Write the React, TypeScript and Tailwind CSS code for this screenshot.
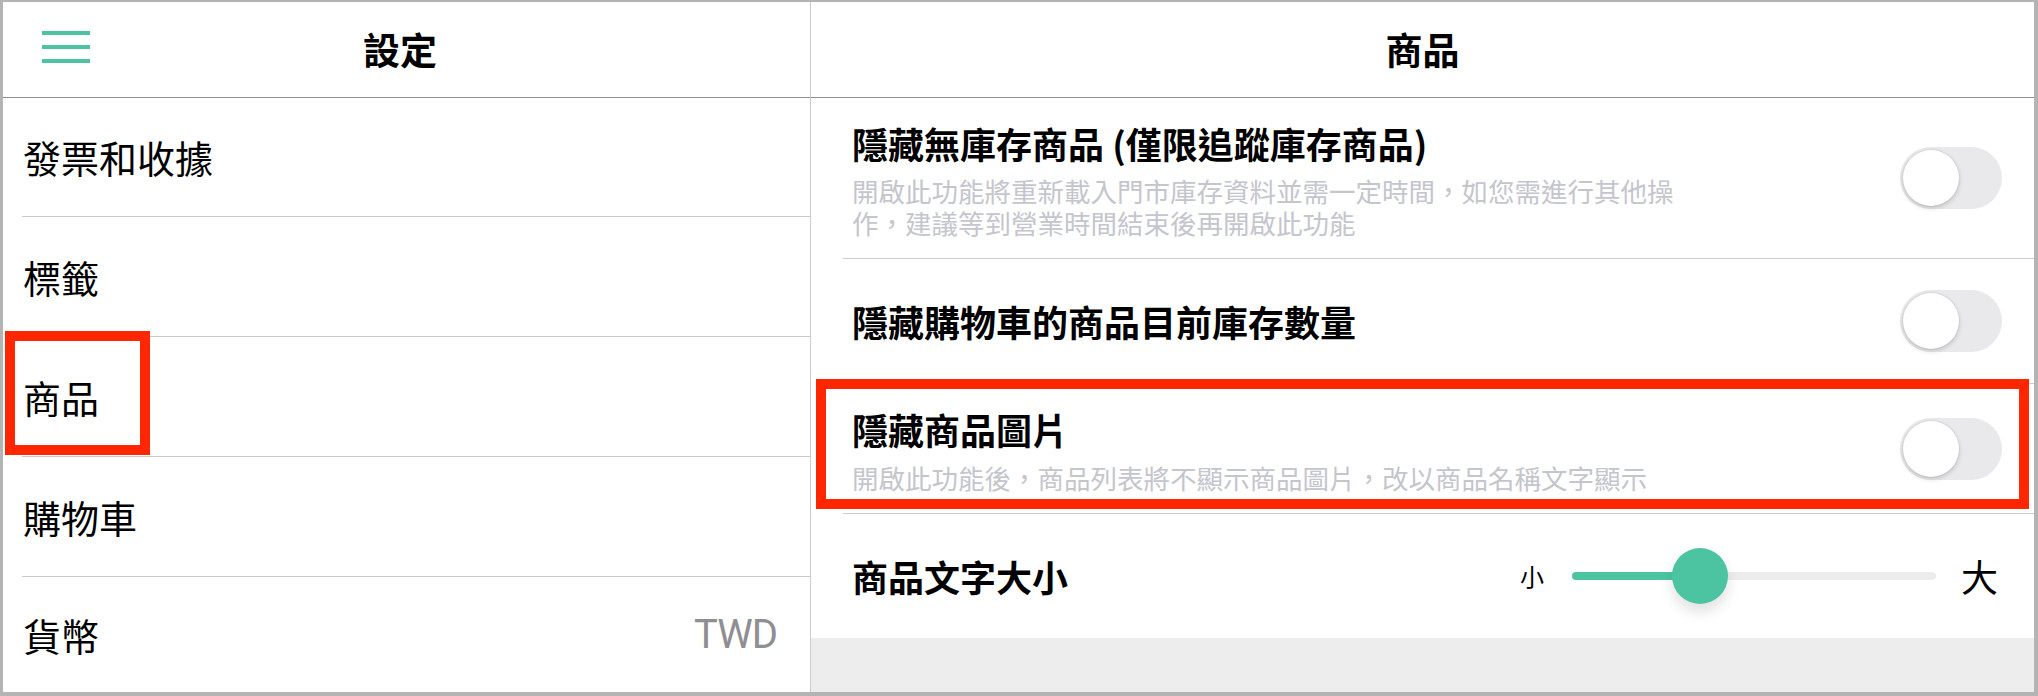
import React from "react";

function Toggle() {
  return (
    <div className="flex h-[62px] w-[102px] shrink-0 items-center rounded-full bg-[#e9e9eb] p-[3px]">
      <div className="h-[56px] w-[56px] rounded-full bg-white shadow-[0_2px_5px_rgba(0,0,0,0.18),0_0_0_1px_rgba(0,0,0,0.04)]" />
    </div>
  );
}

function LeftRow({ label, h }: { label: string; h: string }) {
  return (
    <div className={"ml-[19px] flex items-center justify-between border-b border-[#cbcbcb] pl-[1px] pr-[33px] " + h}>
      <span className="text-[38px] leading-none">{label}</span>
    </div>
  );
}

export default function App() {
  return (
    <div className="relative h-[696px] w-[2038px] bg-[#b4b4b4] pb-[4px] pl-[3px] pr-[4px] pt-[2px] font-['Noto_Sans_CJK_TC',sans-serif] text-black">
      <div className="flex h-full bg-white">
        {/* Left column */}
        <div className="flex w-[808px] shrink-0 flex-col border-r border-[#cdcdcd]">
          <div className="grid h-[96px] shrink-0 grid-cols-[1fr_auto_1fr] items-center border-b border-[#8f8f8f] pr-[13px]">
            <div className="mb-[5px] flex flex-col gap-[10px] pl-[39px]">
              <span className="block h-[4px] w-[48px] bg-[#4ec3a3]" />
              <span className="block h-[4px] w-[48px] bg-[#4ec3a3]" />
              <span className="block h-[4px] w-[48px] bg-[#4ec3a3]" />
            </div>
            <div className="text-[37px] font-bold leading-none">設定</div>
            <div />
          </div>
          <LeftRow label="發票和收據" h="h-[119px]" />
          <LeftRow label="標籤" h="h-[120px]" />
          <LeftRow label="商品" h="h-[120px]" />
          <LeftRow label="購物車" h="h-[120px]" />
          <div className="ml-[19px] flex flex-1 items-center justify-between pl-[1px] pr-[33px]">
            <span className="text-[38px] leading-none">貨幣</span>
            <span className="font-['Roboto',sans-serif] text-[40px] leading-none tracking-[-1px] text-[#8e8e93]">TWD</span>
          </div>
        </div>

        {/* Right column */}
        <div className="flex flex-1 flex-col">
          <div className="flex h-[96px] shrink-0 items-center justify-center border-b border-[#8f8f8f]">
            <div className="text-[37px] font-bold leading-none">商品</div>
          </div>

          <div className="ml-[32px] flex h-[161px] shrink-0 items-center border-b border-[#cdcdcd] pl-[9px] pr-[32px]">
            <div className="flex-1">
              <div className="text-[36px] font-bold leading-[52px]">隱藏無庫存商品 (僅限追蹤庫存商品)</div>
              <div className="mt-[6px] text-[26.5px] leading-[32px] text-[#c4c5cd]">
                開啟此功能將重新載入門市庫存資料並需一定時間，如您需進行其他操
                <br />
                作，建議等到營業時間結束後再開啟此功能
              </div>
            </div>
            <Toggle />
          </div>

          <div className="ml-[32px] flex h-[125px] shrink-0 items-center border-b border-[#cdcdcd] pl-[9px] pr-[32px]">
            <div className="flex-1 text-[36px] font-bold leading-[52px]">隱藏購物車的商品目前庫存數量</div>
            <Toggle />
          </div>

          <div className="ml-[32px] flex h-[130px] shrink-0 items-center border-b border-[#cdcdcd] pl-[9px] pr-[32px]">
            <div className="flex-1">
              <div className="text-[36px] font-bold leading-[52px]">隱藏商品圖片</div>
              <div className="mt-[7px] text-[26.5px] leading-[32px] text-[#c4c5cd]">
                開啟此功能後，商品列表將不顯示商品圖片，改以商品名稱文字顯示
              </div>
            </div>
            <Toggle />
          </div>

          <div className="ml-[32px] flex h-[124px] shrink-0 items-center pl-[9px] pr-[36px]">
            <div className="flex-1 text-[36px] font-bold leading-[52px]">商品文字大小</div>
            <span className="text-[24px] leading-none">小</span>
            <div className="relative ml-[28px] mr-[25px] flex h-[56px] w-[364px] items-center">
              <div className="flex h-[8px] w-full overflow-hidden rounded-full bg-[#ececec]">
                <div className="h-full w-[128px] bg-[#4cc4a2]" />
              </div>
              <div className="absolute left-[100px] top-0 h-[56px] w-[56px] rounded-full bg-[#4cc4a2] shadow-[0_8px_14px_rgba(0,0,0,0.12)]" />
            </div>
            <span className="text-[37px] leading-none">大</span>
          </div>

          <div className="flex-1 bg-[#ededed]" />
        </div>
      </div>

      {/* Annotation boxes */}
      <div className="absolute left-[5px] top-[331px] h-[124px] w-[145px] border-[10px] border-[#ff2600]" />
      <div className="absolute left-[816px] top-[379px] h-[130px] w-[1213px] border-[10px] border-[#ff2600]" />
    </div>
  );
}
